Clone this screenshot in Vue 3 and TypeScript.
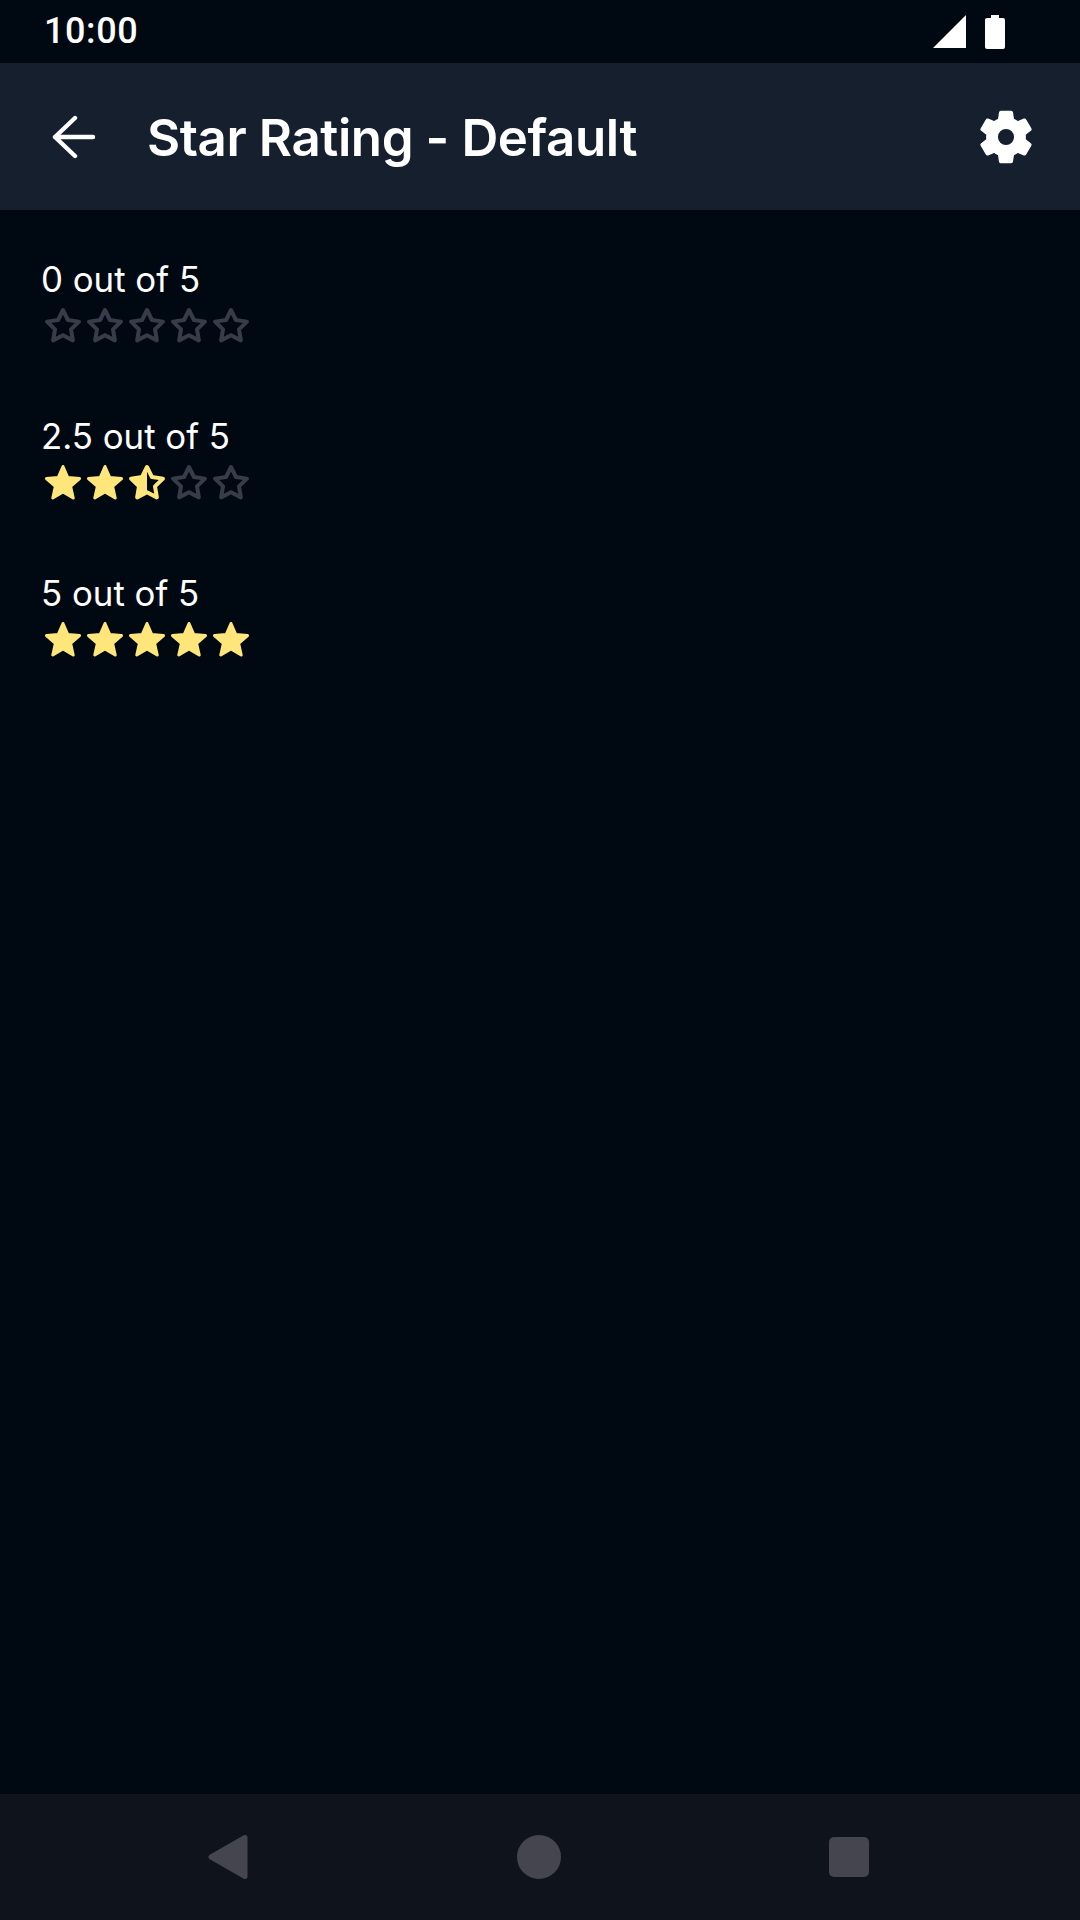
<script setup lang="ts">
type Kind = 'full' | 'half' | 'empty'

function starPoints(R: number, r: number, cx: number, cy: number, from = 0, to = 9): string {
  const pts: string[] = []
  for (let k = from; k <= to; k++) {
    const rad = k % 2 === 0 ? R : r
    const a = ((-90 + 36 * k) * Math.PI) / 180
    pts.push(`${(cx + rad * Math.cos(a)).toFixed(2)},${(cy + rad * Math.sin(a)).toFixed(2)}`)
  }
  return pts.join(' ')
}
const solid = starPoints(17.4, 8, 21, 22.9)
const outline = starPoints(16.8, 8.4, 21, 22.8)
const leftHalf = starPoints(16.8, 8.4, 21, 22.8, 5, 10)

const rows: { label: string; stars: Kind[] }[] = [
  { label: '0 out of 5', stars: ['empty', 'empty', 'empty', 'empty', 'empty'] },
  { label: '2.5 out of 5', stars: ['full', 'full', 'half', 'empty', 'empty'] },
  { label: '5 out of 5', stars: ['full', 'full', 'full', 'full', 'full'] },
]
</script>

<template>
  <div class="screen">
    <div class="status">
      <span class="time">10:00</span>
      <div class="status-icons">
        <svg class="signal" width="33" height="33" viewBox="0 0 33 33"><path d="M33 0V33H0z" fill="#fff" /></svg>
        <svg class="battery" width="20" height="34" viewBox="0 0 20 34">
          <path d="M6 0h8v3h4a2 2 0 0 1 2 2v27a2 2 0 0 1-2 2H2a2 2 0 0 1-2-2V5a2 2 0 0 1 2-2h4z" fill="#fff" />
        </svg>
      </div>
    </div>
    <header class="toolbar">
      <svg class="back" width="44" height="44" viewBox="0 0 44 44" fill="none" stroke="#fff" stroke-width="4.4" stroke-linecap="round" stroke-linejoin="round">
        <path d="M41 22H3M23 3 3 22l20 19" />
      </svg>
      <h1 class="title">Star Rating - Default</h1>
      <svg class="gear" width="64" height="64" viewBox="0 0 24 24">
        <path fill="#fff" stroke="#fff" stroke-width="0.5" stroke-linejoin="round" fill-rule="evenodd" d="M19.14 12.94c.04-.3.06-.61.06-.94 0-.32-.02-.64-.07-.94l2.03-1.58c.18-.14.23-.41.12-.61l-1.92-3.32c-.12-.22-.37-.29-.59-.22l-2.39.96c-.5-.38-1.03-.7-1.62-.94L14.4 2.81c-.04-.24-.24-.41-.48-.41h-3.84c-.24 0-.43.17-.47.41L9.25 5.35c-.59.24-1.13.57-1.62.94L5.24 5.33c-.22-.08-.47 0-.59.22L2.74 8.87c-.12.21-.08.47.12.61l2.03 1.58c-.05.3-.09.63-.09.94s.02.64.07.94l-2.03 1.58c-.18.14-.23.41-.12.61l1.92 3.32c.12.22.37.29.59.22l2.39-.96c.5.38 1.03.7 1.62.94l.36 2.54c.05.24.24.41.48.41h3.84c.24 0 .44-.17.47-.41l.36-2.54c.59-.24 1.13-.56 1.62-.94l2.39.96c.22.08.47 0 .59-.22l1.92-3.32c.12-.22.07-.47-.12-.61l-2.01-1.58zM12 15.27a3.27 3.27 0 1 1 0-6.54 3.27 3.27 0 0 1 0 6.54z" />
      </svg>
    </header>
    <main class="content">
      <section v-for="row in rows" :key="row.label" class="rating">
        <div class="label">{{ row.label }}</div>
        <div class="stars">
          <svg v-for="(s, i) in row.stars" :key="i" class="star" :class="s" width="42" height="42" viewBox="0 0 42 42">
            <polygon v-if="s === 'full'" :points="solid" />
            <template v-else>
              <polygon v-if="s === 'half'" class="half-fill" :points="leftHalf" />
              <polygon class="line" :points="outline" />
            </template>
          </svg>
        </div>
      </section>
    </main>
    <nav class="navbar">
      <svg width="40" height="44" viewBox="0 0 40 44"><path d="M3 22 37 2.5V41.5z" fill="#45454f" stroke="#45454f" stroke-width="5" stroke-linejoin="round" /></svg>
      <span class="home"></span>
      <span class="recent"></span>
    </nav>
  </div>
</template>

<style scoped>
.screen {
  width: 1080px;
  height: 1920px;
  display: flex;
  flex-direction: column;
  background: #000812;
  color: #fff;
  font-family: Inter, "Liberation Sans", sans-serif;
  overflow: hidden;
}
.status {
  height: 63px;
  flex: none;
  display: flex;
  align-items: center;
  justify-content: space-between;
  padding: 0 75px 0 44px;
}
.time {
  font-family: Roboto, sans-serif;
  font-size: 36px;
  font-weight: 500;
  letter-spacing: 0.6px;
  line-height: 63px;
}
.status-icons {
  display: flex;
  align-items: center;
  gap: 19px;
}
.toolbar {
  height: 147px;
  flex: none;
  display: flex;
  align-items: center;
  background: #151f2e;
  padding: 0 42px 0 52px;
}
.title {
  flex: 1;
  margin: 3px 0 0 51px;
  font-size: 51px;
  font-weight: 600;
  line-height: 60px;
  letter-spacing: -0.4px;
}
.content {
  flex: 1;
  padding: 45px 42px 0;
}
.rating {
  margin-bottom: 66px;
}
.label {
  font-size: 34.8px;
  line-height: 48px;
  margin-left: -1px;
}
.stars {
  display: flex;
  height: 42px;
  margin-top: 1px;
}
.star polygon { fill: #ffe67a; stroke: #ffe67a; stroke-width: 3; stroke-linejoin: round; }
.star .half-fill { stroke-width: 0; }
.star .line { fill: none; stroke-width: 4; }
.star.empty .line { stroke: #363d48; }
.navbar {
  height: 126px;
  flex: none;
  background: #0f141c;
  display: flex;
  align-items: center;
  padding-left: 208px;
}
.home {
  width: 44px;
  height: 44px;
  border-radius: 50%;
  background: #45454f;
  margin-left: 269px;
}
.recent {
  width: 40px;
  height: 40px;
  border-radius: 5px;
  background: #45454f;
  margin-left: 268px;
}
</style>
